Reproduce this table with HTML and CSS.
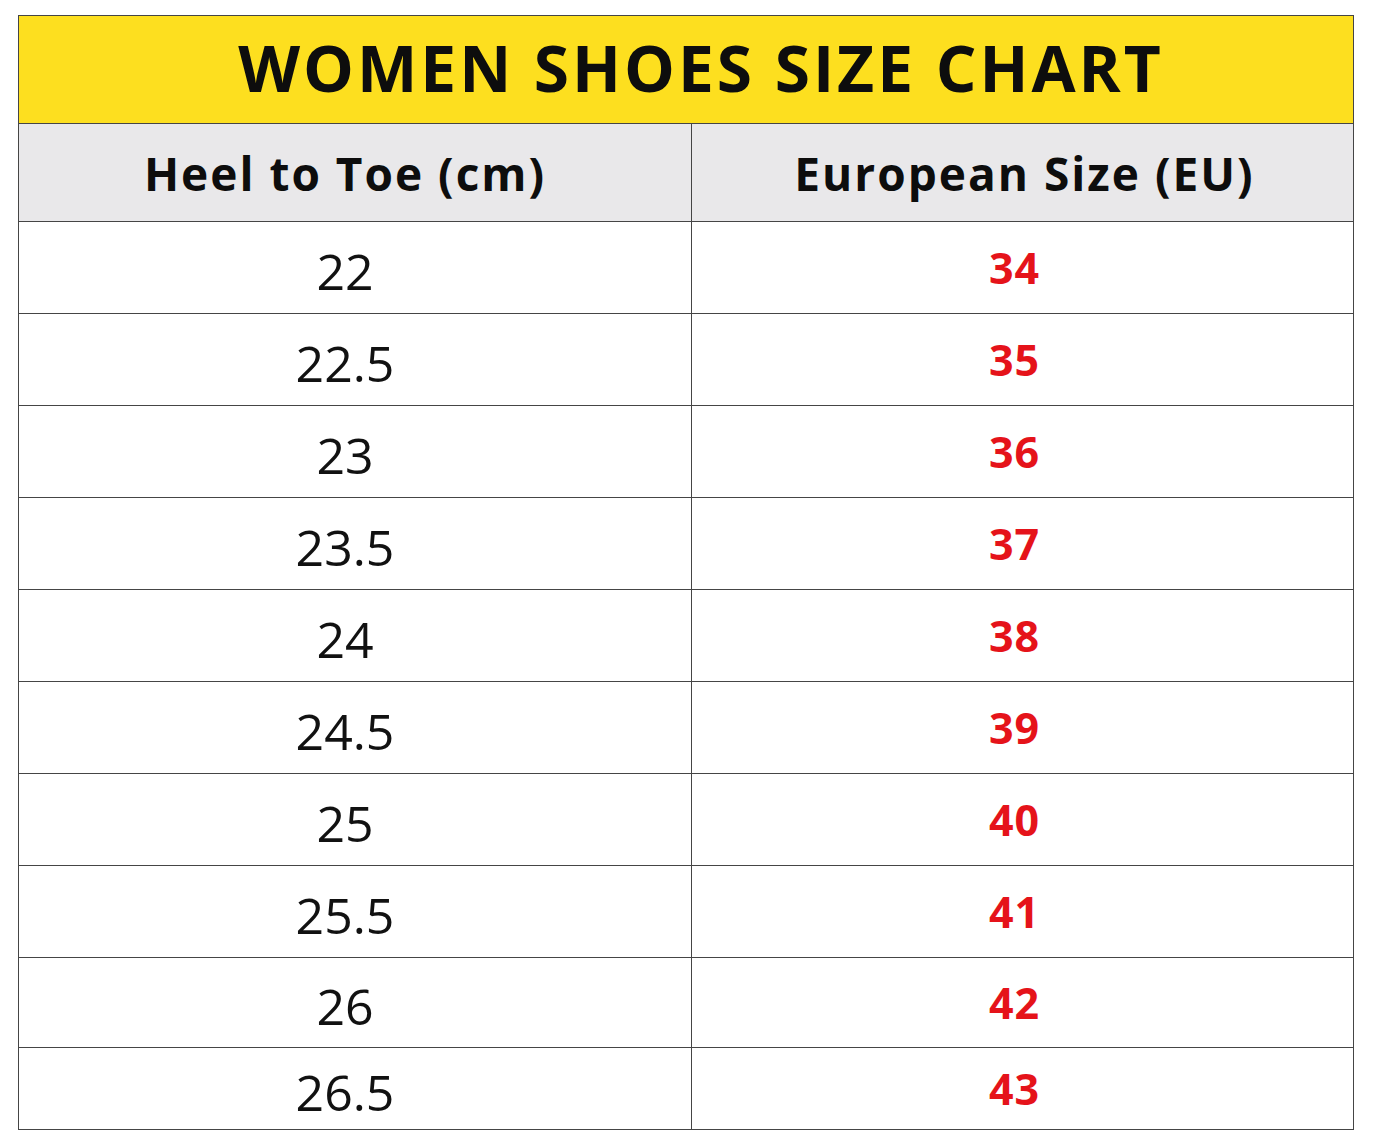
FILE: index.html
```html
<!DOCTYPE html>
<html lang="en">
<head>
<meta charset="utf-8">
<title>Women Shoes Size Chart</title>
<link rel="stylesheet" href="styles.css">
</head>
<body>
<div class="chart">
  <div class="title">WOMEN SHOES SIZE CHART</div>
  <div class="row head">
    <div class="cell left">Heel to Toe (cm)</div>
    <div class="cell right">European Size (EU)</div>
  </div>
  <div class="row"><div class="cell left num">22</div><div class="cell right eu">34</div></div>
  <div class="row"><div class="cell left num">22.5</div><div class="cell right eu">35</div></div>
  <div class="row"><div class="cell left num">23</div><div class="cell right eu">36</div></div>
  <div class="row"><div class="cell left num">23.5</div><div class="cell right eu">37</div></div>
  <div class="row"><div class="cell left num">24</div><div class="cell right eu">38</div></div>
  <div class="row"><div class="cell left num">24.5</div><div class="cell right eu">39</div></div>
  <div class="row"><div class="cell left num">25</div><div class="cell right eu">40</div></div>
  <div class="row"><div class="cell left num">25.5</div><div class="cell right eu">41</div></div>
  <div class="row r9"><div class="cell left num">26</div><div class="cell right eu">42</div></div>
  <div class="row last"><div class="cell left num">26.5</div><div class="cell right eu">43</div></div>
</div>
</body>
</html>
```
FILE: styles.css
```css
html, body {
  margin: 0;
  padding: 0;
  background: #ffffff;
}
body {
  padding: 15px 19px 0 18px;
  font-family: "Open Sans", "Noto Sans", "Liberation Sans", sans-serif;
  color: #111;
}
.chart {
  width: 1336px;
  border: 1.5px solid #454545;
  box-sizing: border-box;
}
.title {
  height: 108px;
  background: #fddf1f;
  border-bottom: 1.5px solid #454545;
  box-sizing: border-box;
  display: flex;
  align-items: center;
  justify-content: center;
  padding-left: 30px;
  padding-bottom: 4px;
  font-weight: 700;
  font-size: 64px;
  letter-spacing: 3px;
  color: #0d0d0d;
}
.row {
  display: grid;
  grid-template-columns: 673px 1fr;
  height: 92px;
  border-bottom: 1.5px solid #454545;
  box-sizing: border-box;
}
.row.head {
  height: 98px;
  background: #e9e8ea;
}
.row.r9 { height: 90px; }
.row.last { height: 81px; border-bottom: none; }
.cell {
  display: flex;
  align-items: center;
  justify-content: center;
}
.cell.left {
  border-right: 1.5px solid #454545;
}
.head .cell {
  font-weight: 700;
  font-size: 46px;
  letter-spacing: 2px;
  color: #0d0d0d;
}
.head .cell.left { padding-right: 20px; }
.head .cell.right { padding-left: 4px; }
.num {
  font-size: 50px;
  font-weight: 400;
  color: #111;
  padding-top: 6px;
  padding-right: 20px;
}
.eu {
  font-size: 43px;
  font-weight: 700;
  color: #e5131a;
  letter-spacing: 1px;
  padding-right: 16px;
}
```
